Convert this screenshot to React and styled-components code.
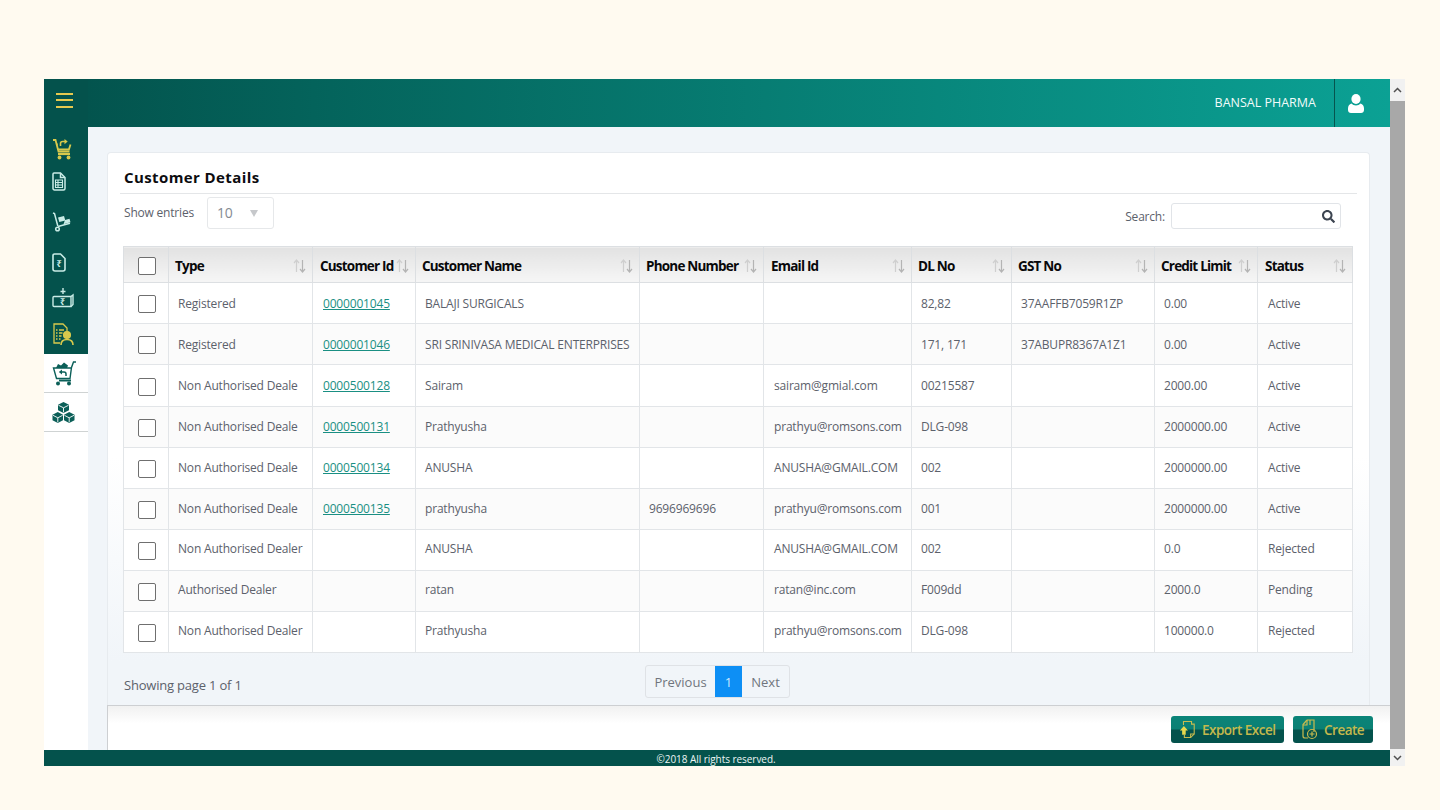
import styled, { createGlobalStyle } from "styled-components";
import { FaSearch } from "react-icons/fa";

const GlobalStyle = createGlobalStyle`
  html, body {
    margin: 0;
    padding: 0;
    background: #fffaf0;
    overflow: hidden;
  }
  * {
    box-sizing: border-box;
  }
`;

const Page = styled.div`
  width: 1440px;
  height: 810px;
  padding: 79px 35px 44px 44px;
  font-family: "Open Sans", "Noto Sans", sans-serif;
  color: #5c616b;
`;

const Frame = styled.div`
  display: flex;
  width: 1361px;
  height: 687px;
`;

const Main = styled.div`
  flex: 1;
  display: flex;
  flex-direction: column;
  min-width: 0;
`;

const TopBar = styled.header`
  height: 48px;
  flex: none;
  display: flex;
  align-items: center;
  background: linear-gradient(90deg, #03514b 0%, #04635b 20%, #0ba194 100%);
`;

const MenuButton = styled.div`
  width: 44px;
  height: 48px;
  display: flex;
  flex-direction: column;
  justify-content: center;
  gap: 4.5px;
  padding: 0 0 6px 12px;
  background: #04524c;
`;

const MenuLine = styled.span`
  display: block;
  width: 17px;
  height: 2px;
  background: #e6c94f;
`;

const UserName = styled.span`
  margin-left: auto;
  margin-right: 18px;
  padding-bottom: 2px;
  font-size: 12.5px;
  color: #f2fbfa;
`;

const UserBox = styled.div`
  width: 56px;
  height: 48px;
  padding: 0 14px 0 0;
  display: flex;
  align-items: center;
  justify-content: center;
  border-left: 1px solid #06544e;
`;

const Body = styled.div`
  flex: 1;
  display: flex;
  min-height: 0;
`;

const Sidebar = styled.nav`
  width: 44px;
  flex: none;
  background: #fff;
  display: flex;
  flex-direction: column;
`;

const DarkGroup = styled.div`
  background: #04524c;
  height: 227px;
  padding-top: 6px;
`;

const SideItem = styled.div`
  height: 32px;
  margin-top: ${(p) => p.$gap || 0}px;
  padding-left: 8px;
  display: flex;
  align-items: center;
`;

const LightItem = styled.div`
  height: 39px;
  padding-left: 8px;
  display: flex;
  align-items: center;
  border-bottom: 1px solid #cfd3d3;
`;

const Content = styled.main`
  flex: 1;
  min-width: 0;
  display: flex;
  flex-direction: column;
  padding: 25px 0 0 19px;
  background: #f1f5f9;
`;

const Card = styled.section`
  height: 553px;
  margin-right: 20px;
  padding: 0 12px;
  flex: none;
  border: 1px solid #e7ebef;
  border-bottom: none;
  border-radius: 4px 4px 0 0;
  background: linear-gradient(180deg, #fff 0%, #fff 55%, #f1f5f9 92%);
`;

const CardTitle = styled.h2`
  margin: 0;
  height: 41px;
  padding: 14px 4px 0;
  border-bottom: 1px solid #e4e6e8;
  font-size: 15px;
  line-height: 20px;
  font-weight: 700;
  letter-spacing: 0.4px;
  color: #0c0c0f;
`;

const Controls = styled.div`
  height: 52px;
  padding: 3px 16px 0 4px;
  display: flex;
  justify-content: space-between;
`;

const Entries = styled.div`
  display: flex;
  align-items: flex-start;
  gap: 13px;
  font-size: 12px;
  letter-spacing: -0.2px;
  line-height: 32px;
`;

const PageSize = styled.div`
  width: 67px;
  height: 32px;
  padding: 0 15px 0 9px;
  display: flex;
  align-items: center;
  justify-content: space-between;
  border: 1px solid #e6e8ea;
  border-radius: 3px;
  font-size: 14px;
  color: #858a92;
`;

const Caret = styled.span`
  width: 0;
  height: 0;
  border-left: 4px solid transparent;
  border-right: 4px solid transparent;
  border-top: 7px solid #c6c8cb;
`;

const SearchGroup = styled.div`
  display: flex;
  align-items: center;
  gap: 6px;
  height: 26px;
  margin-top: 6px;
  font-size: 12px;
  letter-spacing: -0.2px;
`;

const SearchBox = styled.div`
  width: 170px;
  height: 26px;
  padding-right: 5px;
  display: flex;
  align-items: center;
  justify-content: flex-end;
  border: 1px solid #e1e4e8;
  border-radius: 3px;
  background: #fff;
  color: #3c4450;
  font-size: 13px;
`;

const Table = styled.table`
  width: 1229px;
  margin-left: 3px;
  table-layout: fixed;
  border-collapse: collapse;
  font-size: 12px;
`;

const HeadCell = styled.th`
  height: 36px;
  padding: 3px 0 0 ${(p) => 6 + (p.$nudge || 0)}px;
  border: 1px solid #dcdfe2;
  background: linear-gradient(180deg, #e2e2e2 0%, #f6f6f6 100%);
  text-align: left;
  font-size: 13.5px;
  font-weight: 700;
  letter-spacing: -0.8px;
  color: #08080a;
  white-space: nowrap;
`;

const HeadInner = styled.div`
  display: flex;
  align-items: center;
  justify-content: space-between;
  padding-right: 6px;
`;

const Row = styled.tr`
  height: ${(p) => p.$h}px;
  background: #fff;
  &:nth-child(even) {
    background: #fbfbfb;
  }
`;

const Cell = styled.td`
  padding: 0 0 ${(p) => p.$lift * 2}px ${(p) => 9 + (p.$nudge || 0)}px;
  border: 1px solid #e2e5e8;
  white-space: nowrap;
  overflow: hidden;
  letter-spacing: -0.18px;
`;

const CheckCell = styled.td`
  padding: 0 0 0 1px;
  border: 1px solid #e2e5e8;
  text-align: center;
`;

const HeadCheck = styled(HeadCell)`
  padding: 0 0 0 1px;
  text-align: center;
`;

const Check = styled.input.attrs({ type: "checkbox", readOnly: true })`
  appearance: none;
  display: block;
  width: 18px;
  height: 18px;
  margin: 2px auto 0;
  border: 1px solid #6f6f6f;
  border-radius: 2px;
  background: #fff;
`;

const IdLink = styled.a`
  color: #1a8f83;
  text-decoration: underline;
`;

const TableFoot = styled.div`
  position: relative;
  display: flex;
  justify-content: center;
  padding-top: 12px;
  margin-left: 4px;
  width: 1229px;
`;

const PageInfo = styled.span`
  position: absolute;
  left: 0;
  top: 23px;
  font-size: 13px;
  letter-spacing: -0.2px;
`;

const Pager = styled.div`
  display: flex;
  height: 33px;
  margin-right: 42px;
  border: 1px solid #dfe2e6;
  border-radius: 3px;
  font-size: 13px;
  color: #70757d;
`;

const PageButton = styled.span`
  width: ${(p) => p.$w}px;
  display: flex;
  align-items: center;
  justify-content: center;
  background: ${(p) => (p.$active ? "#0d8ff5" : "transparent")};
  color: ${(p) => (p.$active ? "#cfeaff" : "inherit")};
`;

const ActionBar = styled.div`
  flex: 1;
  padding: 10px 17px 0 0;
  display: flex;
  justify-content: flex-end;
  gap: 9px;
  border-top: 1px solid #cdcfd2;
  border-left: 1px solid #cdcfd2;
  background: linear-gradient(180deg, #f1f1f1 0%, #fff 40%);
`;

const ActionButton = styled.button`
  height: 27px;
  width: ${(p) => p.$w}px;
  padding: 0 0 0 8px;
  display: flex;
  align-items: center;
  gap: 6px;
  border: none;
  border-radius: 3px;
  background: linear-gradient(180deg, #0b8478 0%, #0b8074 48%, #04524c 52%, #04524c 100%);
  font-family: inherit;
  font-size: 13.5px;
  font-weight: 600;
  letter-spacing: -0.5px;
  color: #c4b94c;
`;

const Footer = styled.footer`
  height: 16px;
  flex: none;
  padding-right: 2px;
  background: #04524c;
  color: #eef6f5;
  font-size: 10px;
  line-height: 19px;
  text-align: center;
  letter-spacing: -0.05px;
  overflow: hidden;
`;

const Scrollbar = styled.div`
  width: 15px;
  flex: none;
  display: flex;
  flex-direction: column;
  background: #f1f1f1;
`;

const ScrollArrow = styled.div`
  height: ${(p) => p.$h}px;
  flex: none;
  display: flex;
  align-items: center;
  justify-content: center;
  color: #505050;
`;

const ScrollThumb = styled.div`
  flex: 1;
  background: #a8a8a8;
`;

const YELLOW = "#d8c94c";
const PALE = "#c9ece6";
const TEAL = "#0b5f58";

const UserIcon = () => (
  <svg width="16" height="19" viewBox="0 0 16 19" fill="#fff">
    <ellipse cx="8" cy="5" rx="4.6" ry="5" />
    <path d="M3.500 9.500c1 1.300 2.800 2 4.500 2s3.500-.7 4.500-2c2.200.6 3.500 2.500 3.500 5V16c0 1.700-1.300 3-3 3H3c-1.700 0-3-1.300-3-3v-1.500c0-2.500 1.300-4.400 3.500-5z" />
  </svg>
);

const CartOutIcon = () => (
  <svg width="21" height="22" viewBox="0 0 21 22" fill="none" stroke={YELLOW} strokeWidth="1.800">
    <path d="M1 2h2.500l3 11.500h11" />
    <path d="M4.500 6.500h1.200M18.500 6.500l-1.600 5H6" />
    <path d="M6 16h12" strokeWidth="2.200" />
    <path d="M8.500 8V5.500c0-1.300 1-2 2.200-2h3" strokeWidth="1.600" />
    <path d="M12.500 1l3.200 2.600-3.200 2.600z" fill={YELLOW} stroke="none" />
    <circle cx="7.500" cy="19.500" r="1.900" fill={YELLOW} stroke="none" />
    <circle cx="16.500" cy="19.500" r="1.900" fill={YELLOW} stroke="none" />
  </svg>
);

const SheetIcon = () => (
  <svg width="14" height="19" viewBox="0 0 14 19" fill="none" stroke={PALE} strokeWidth="1.500">
    <path d="M2 1h6.500L13 5.500V16.500c0 .8-.6 1.500-1.500 1.500h-9C1.600 18 1 17.300 1 16.500V2c0-.6.400-1 1-1z" />
    <path d="M8.500 1v4.500H13" />
    <path d="M3.500 8h7v7.500h-7zM3.500 10.500h7M3.500 13h7M6 8v7.500" strokeWidth="1.100" />
  </svg>
);

const TrolleyIcon = () => (
  <svg width="19" height="20" viewBox="0 0 19 20" fill="none" stroke={PALE} strokeWidth="1.500">
    <path d="M1 1l1.500.6 3.300 12.400" />
    <path d="M6 14.500l12-3.200" />
    <circle cx="5.500" cy="17" r="1.800" />
    <path d="M6 5.500l6-1.600 1.300 4.600-6 1.600z" fill={PALE} stroke="none" />
    <path d="M13 8l4.500-1.200 1 3.500-7 1.900z" fill={PALE} stroke="none" />
  </svg>
);

const RupeeDocIcon = () => (
  <svg width="14" height="19" viewBox="0 0 14 19" fill="none" stroke={PALE} strokeWidth="1.600">
    <path d="M2.500 1h6L13 5.500V16c0 1.200-.8 2-2 2H3c-1.200 0-2-.8-2-2V2.500C1 1.600 1.600 1 2.500 1z" />
    <text x="7" y="14" fontSize="9" fontWeight="700" fill={PALE} stroke="none" textAnchor="middle" fontFamily="Noto Sans, sans-serif">₹</text>
  </svg>
);

const CashInIcon = () => (
  <svg width="22" height="20" viewBox="0 0 22 20" fill="none" stroke={PALE} strokeWidth="1.400">
    <path d="M11 0v6M8.500 3.500h5" />
    <path d="M2 8.500h17v10H2c-.6 0-1-.4-1-1v-8c0-.6.400-1 1-1z" />
    <path d="M19 8.500l2-1.500v9.500l-2 2" />
    <text x="10.500" y="17" fontSize="9" fontWeight="700" fill={PALE} stroke="none" textAnchor="middle" fontFamily="Noto Sans, sans-serif">₹</text>
  </svg>
);

const ReportUserIcon = () => (
  <svg width="23" height="23" viewBox="0 0 23 23" fill="none" stroke={YELLOW} strokeWidth="1.300">
    <path d="M8 20H2V1h9l4 4v3" />
    <path d="M4 7h1.500M7 7h5M4 10h1.500M7 10h3.500M4 13h1.500M7 13h2.500M4 16h1.500M7 16h1.500" />
    <circle cx="15" cy="12" r="3.400" fill={YELLOW} />
    <path d="M9 22c0-3.500 2.500-5.500 6-5.500s6 2 6 5.500" strokeWidth="1.600" />
  </svg>
);

const CartReturnIcon = () => (
  <svg width="25" height="25" viewBox="0 0 25 25" fill="none" stroke={TEAL} strokeWidth="1.400">
    <path d="M24 1h-2.500l-2 5.500-1.500 11H4.500L1.500 7h18" />
    <path d="M4 7l2-4 3 1.500 3-3 4 3L15 7z" fill={TEAL} stroke="none" />
    <path d="M7 19.500h12" strokeWidth="2" />
    <circle cx="6" cy="22.500" r="2" fill={TEAL} stroke="none" />
    <circle cx="17" cy="22.500" r="2" fill={TEAL} stroke="none" />
    <path d="M14 15v-2c0-1.200-.8-2-2-2H9" strokeWidth="1.500" />
    <path d="M10 8.500L6.800 11l3.200 2.500z" fill={TEAL} stroke="none" />
  </svg>
);

const BoxesIcon = () => (
  <svg width="23" height="21" viewBox="0 0 23 21" fill={TEAL}>
    <path d="M11.500 0L17 2.800v5.400l-5.500 2.800L6 8.200V2.800z" />
    <path d="M5.800 10L11 12.800v5.400L5.800 21 .5 18.200v-5.400z" />
    <path d="M17.200 10l5.300 2.800v5.400L17.200 21 12 18.200v-5.400z" />
    <path d="M6.500 3.300l5 2.500 5-2.500M11.500 5.800v4.500M1 13.300l4.800 2.500 4.800-2.500M5.800 15.800v4.500M12.400 13.300l4.800 2.500 4.800-2.500M17.200 15.800v4.500" fill="none" stroke="#fff" strokeWidth=".9" />
  </svg>
);

const SortIcon = () => (
  <svg width="13" height="14" viewBox="0 0 13 14" fill="none" strokeWidth="1.200">
    <path d="M3.500 13V1.500M1 4l2.500-3L6 4" stroke="#cfcfcf" />
    <path d="M9.500 1v11.500M7 10l2.500 3 2.500-3" stroke="#b4b4b4" />
  </svg>
);

const ExportIcon = () => (
  <svg width="17" height="19" viewBox="0 0 19 20" fill="none" stroke="#c9bb4e" strokeWidth="1.200">
    <path d="M5 5V1h9v3h3v11l-4 4H6v-3" />
    <path d="M13 19v-4h4" />
    <path d="M5.500 6L10 11H7.500v5h-4v-5H1z" fill="#e6d84e" stroke="none" />
  </svg>
);

const CreateIcon = () => (
  <svg width="17" height="21" viewBox="0 0 17 21" fill="none" stroke="#c9bb4e" strokeWidth="1.200">
    <path d="M6 1h7v12M6 1L2 5.500V17c0 1.200.8 2 2 2h3" />
    <path d="M6 1v5H2M9 1v5" />
    <circle cx="11" cy="15" r="4.500" />
    <path d="M11 12.500v5M8.500 15h5" />
  </svg>
);

const ChevronUp = () => (
  <svg width="9" height="6" viewBox="0 0 9 6" fill="none" stroke="currentColor" strokeWidth="1.500">
    <path d="M1 5l3.500-3.500L8 5" />
  </svg>
);

const ChevronDown = () => (
  <svg width="9" height="6" viewBox="0 0 9 6" fill="none" stroke="currentColor" strokeWidth="1.500">
    <path d="M1 1l3.500 3.500L8 1" />
  </svg>
);

const columns = [
  { title: "Type", width: 144 },
  { title: "Customer Id", width: 103, nudge: 1 },
  { title: "Customer Name", width: 224 },
  { title: "Phone Number", width: 124 },
  { title: "Email Id", width: 148, nudge: 1 },
  { title: "DL No", width: 100 },
  { title: "GST No", width: 143 },
  { title: "Credit Limit", width: 103 },
  { title: "Status", width: 95, nudge: 1 },
];

const rows = [
  ["Registered", "0000001045", "BALAJI SURGICALS", "", "", "82,82", "37AAFFB7059R1ZP", "0.00", "Active"],
  ["Registered", "0000001046", "SRI SRINIVASA MEDICAL ENTERPRISES", "", "", "171, 171", "37ABUPR8367A1Z1", "0.00", "Active"],
  ["Non Authorised Deale", "0000500128", "Sairam", "", "sairam@gmial.com", "00215587", "", "2000.00", "Active"],
  ["Non Authorised Deale", "0000500131", "Prathyusha", "", "prathyu@romsons.com", "DLG-098", "", "2000000.00", "Active"],
  ["Non Authorised Deale", "0000500134", "ANUSHA", "", "ANUSHA@GMAIL.COM", "002", "", "2000000.00", "Active"],
  ["Non Authorised Deale", "0000500135", "prathyusha", "9696969696", "prathyu@romsons.com", "001", "", "2000000.00", "Active"],
  ["Non Authorised Dealer", "", "ANUSHA", "", "ANUSHA@GMAIL.COM", "002", "", "0.0", "Rejected"],
  ["Authorised Dealer", "", "ratan", "", "ratan@inc.com", "F009dd", "", "2000.0", "Pending"],
  ["Non Authorised Dealer", "", "Prathyusha", "", "prathyu@romsons.com", "DLG-098", "", "100000.0", "Rejected"],
];

const App = () => {
  return (
    <Page>
      <GlobalStyle />
      <Frame>
        <Main>
          <TopBar>
            <MenuButton>
              <MenuLine />
              <MenuLine />
              <MenuLine />
            </MenuButton>
            <UserName>BANSAL PHARMA</UserName>
            <UserBox>
              <UserIcon />
            </UserBox>
          </TopBar>
          <Body>
            <Sidebar>
              <DarkGroup>
                <SideItem><CartOutIcon /></SideItem>
                <SideItem><SheetIcon /></SideItem>
                <SideItem $gap={9}><TrolleyIcon /></SideItem>
                <SideItem $gap={8}><RupeeDocIcon /></SideItem>
                <SideItem $gap={4}><CashInIcon /></SideItem>
                <SideItem $gap={4}><ReportUserIcon /></SideItem>
              </DarkGroup>
              <LightItem><CartReturnIcon /></LightItem>
              <LightItem><BoxesIcon /></LightItem>
            </Sidebar>
            <Content>
              <Card>
                <CardTitle>Customer Details</CardTitle>
                <Controls>
                  <Entries>
                    Show entries
                    <PageSize>
                      10
                      <Caret />
                    </PageSize>
                  </Entries>
                  <SearchGroup>
                    Search:
                    <SearchBox>
                      <FaSearch />
                    </SearchBox>
                  </SearchGroup>
                </Controls>
                <Table>
                  <colgroup>
                    <col width="45" />
                    {columns.map((c) => (
                      <col key={c.title} width={c.width} />
                    ))}
                  </colgroup>
                  <thead>
                    <tr>
                      <HeadCheck><Check /></HeadCheck>
                      {columns.map((c) => (
                        <HeadCell key={c.title} $nudge={c.nudge}>
                          <HeadInner>
                            {c.title}
                            <SortIcon />
                          </HeadInner>
                        </HeadCell>
                      ))}
                    </tr>
                  </thead>
                  <tbody>
                    {rows.map((r, i) => (
                      <Row key={i} $h={i === 2 ? 42 : 41}>
                        <CheckCell><Check /></CheckCell>
                        {r.map((v, j) => (
                          <Cell key={j} $lift={i < 3 ? 0 : i < 6 ? 1 : 2} $nudge={columns[j].nudge}>
                            {j === 1 && v ? <IdLink>{v}</IdLink> : v}
                          </Cell>
                        ))}
                      </Row>
                    ))}
                  </tbody>
                </Table>
                <TableFoot>
                  <PageInfo>Showing page 1 of 1</PageInfo>
                  <Pager>
                    <PageButton $w={69}>Previous</PageButton>
                    <PageButton $w={27} $active>1</PageButton>
                    <PageButton $w={47}>Next</PageButton>
                  </Pager>
                </TableFoot>
              </Card>
              <ActionBar>
                <ActionButton $w={113}>
                  <ExportIcon />
                  Export Excel
                </ActionButton>
                <ActionButton $w={80}>
                  <CreateIcon />
                  Create
                </ActionButton>
              </ActionBar>
            </Content>
          </Body>
          <Footer>©2018 All rights reserved.</Footer>
        </Main>
        <Scrollbar>
          <ScrollArrow $h={22}><ChevronUp /></ScrollArrow>
          <ScrollThumb />
          <ScrollArrow $h={17}><ChevronDown /></ScrollArrow>
        </Scrollbar>
      </Frame>
    </Page>
  );
};

export default App;
